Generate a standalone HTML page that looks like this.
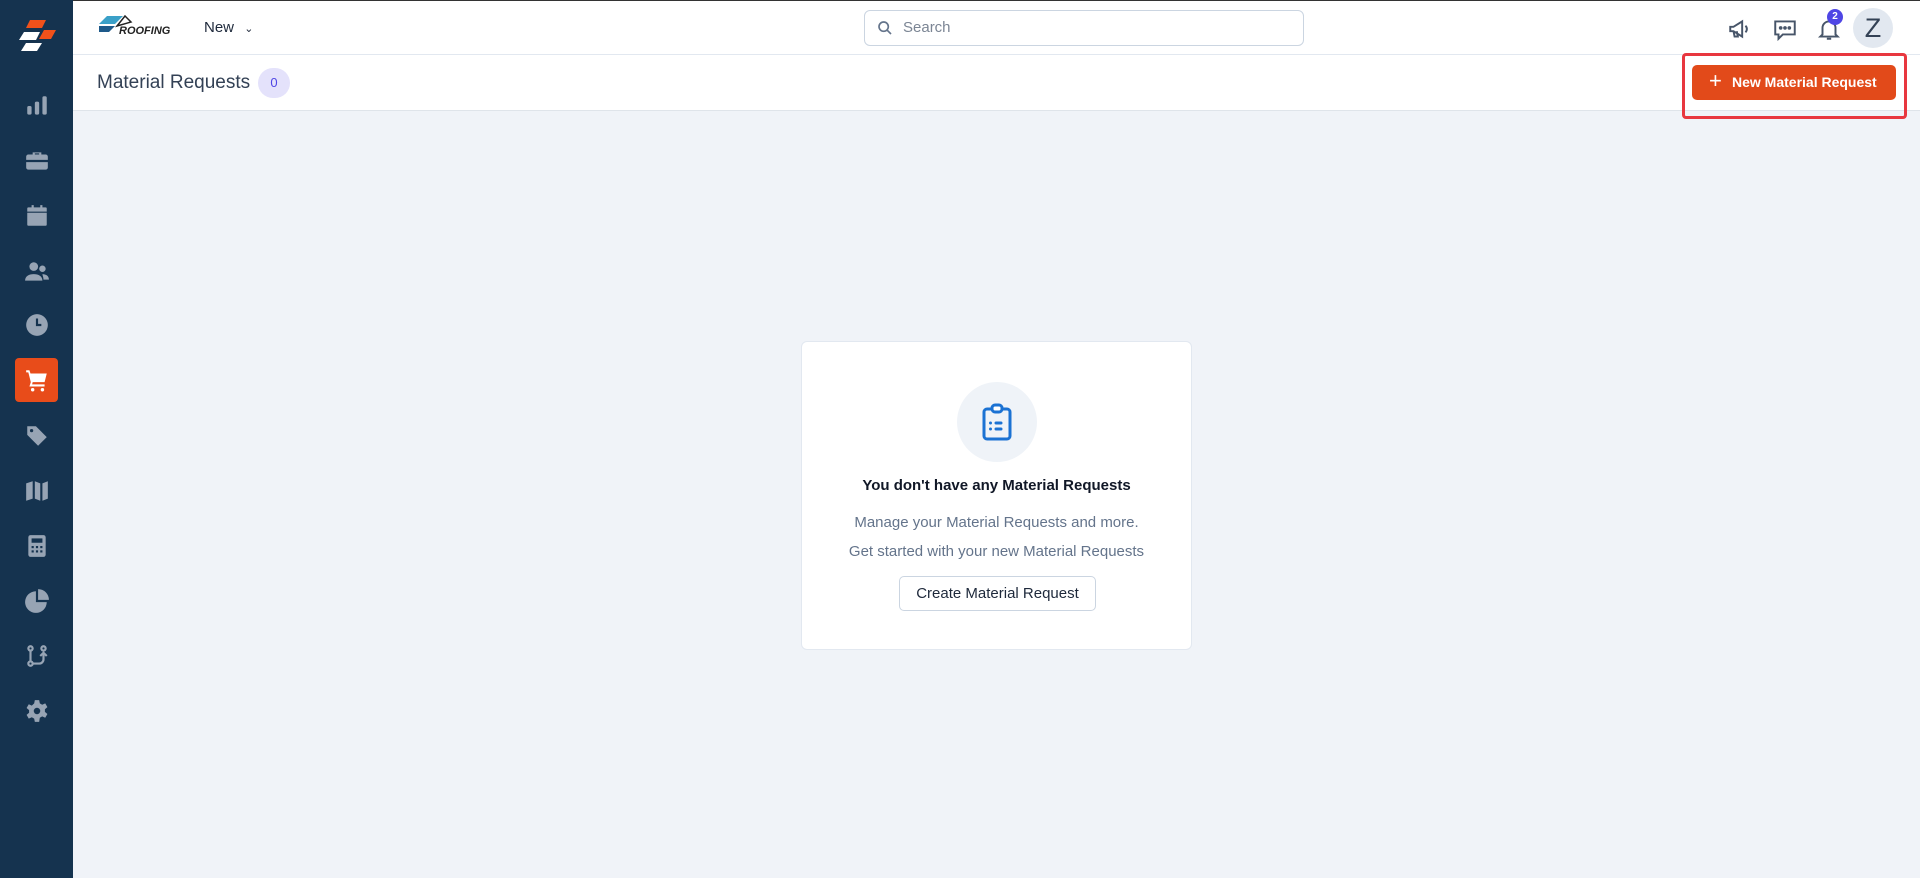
<!DOCTYPE html>
<html><head><meta charset="utf-8"><style>
*{box-sizing:border-box;margin:0;padding:0}
body{width:1920px;height:878px;overflow:hidden;background:#f0f3f8;font-family:"Liberation Sans",sans-serif;position:relative;color:#1e293b}
.side{position:absolute;left:0;top:0;width:73px;height:878px;background:#15334f}
.top{position:absolute;left:73px;top:0;right:0;height:55px;background:#fff;border-bottom:1px solid #e2e8f0;border-top:1px solid #333}
.hdr{position:absolute;left:73px;top:55px;right:0;height:56px;background:#fff;border-bottom:1px solid #dfe4ea}
.ic{position:absolute;left:24px;width:26px;height:26px}
.abs{position:absolute}
</style></head><body>
<div class="side">
<svg class="abs" style="left:16px;top:20px" width="42" height="42" viewBox="0 0 42 42">
<polygon points="14,0 30,0 26,8 10,8" fill="#f0511a"/>
<polygon points="28,10 40,10 35,19 23,19" fill="#f0511a"/>
<polygon points="8,12 24,12 20,20 3,20" fill="#fff"/>
<polygon points="10,23 26,23 21,31 5,31" fill="#fff"/>
</svg>
<svg class="ic" style="top:93px" viewBox="0 0 24 24" fill="#97a4b4"><rect x="3" y="12" width="4" height="8" rx="1.5"/><rect x="10" y="8" width="4" height="12" rx="1.5"/><rect x="17" y="3" width="4" height="17" rx="1.5"/></svg>
<svg class="ic" style="top:148px" viewBox="0 0 24 24" fill="#97a4b4"><path d="M8 6V4h8v2h4a2 2 0 0 1 2 2v3H2V8a2 2 0 0 1 2-2zm2 0h4V5h-4zM2 13h20v5a2 2 0 0 1-2 2H4a2 2 0 0 1-2-2z"/></svg>
<svg class="ic" style="top:203px" viewBox="0 0 24 24" fill="#97a4b4"><path d="M7 2h2v2h6V2h2v2h3a1 1 0 0 1 1 1v15a1 1 0 0 1-1 1H4a1 1 0 0 1-1-1V5a1 1 0 0 1 1-1h3zM3 8v1h18V8z"/></svg>
<svg class="ic" style="top:259px" viewBox="0 0 24 24" fill="#97a4b4"><circle cx="9" cy="7" r="4"/><circle cx="17" cy="9" r="3"/><path d="M1 20c0-4 3.5-6 8-6s8 2 8 6zM17 14c3 0 6 1.5 6 5h-5c0-2-1-4-1-5z"/></svg>
<svg class="ic" style="top:312px" viewBox="0 0 24 24"><circle cx="12" cy="12" r="10" fill="#97a4b4"/><path d="M12 6v6h4" stroke="#15334f" stroke-width="2" fill="none"/></svg>
<div class="abs" style="left:15px;top:358px;width:43px;height:44px;background:#e84c1a;border-radius:4px"></div>
<svg class="ic" style="top:367px" viewBox="0 0 24 24" fill="#fff"><path d="M2 3h3l1 3h15l-2 8H8l-.5 2H19v2H5l1.3-4L4 5H2z"/><circle cx="8" cy="21" r="1.6"/><circle cx="17" cy="21" r="1.6"/></svg>
<svg class="ic" style="top:423px" viewBox="0 0 24 24" fill="#97a4b4"><path d="M3 3h8l10 10-8 8L3 11z"/><circle cx="7" cy="7" r="1.5" fill="#15334f"/></svg>
<svg class="ic" style="top:478px" viewBox="0 0 24 24" fill="#97a4b4"><path d="M2 5l6-2v16l-6 2zM10 3l5 2v16l-5-2zM17 5l5-2v16l-5 2z"/></svg>
<svg class="ic" style="top:533px" viewBox="0 0 24 24"><rect x="4" y="2" width="16" height="20" rx="2" fill="#97a4b4"/><rect x="7" y="5" width="10" height="4" fill="#15334f"/><g fill="#15334f"><rect x="7" y="12" width="2" height="2"/><rect x="11" y="12" width="2" height="2"/><rect x="15" y="12" width="2" height="2"/><rect x="7" y="16" width="2" height="2"/><rect x="11" y="16" width="2" height="2"/><rect x="15" y="16" width="2" height="2"/></g></svg>
<svg class="ic" style="top:588px" viewBox="0 0 24 24" fill="#97a4b4"><path d="M11 3v10h10a10 10 0 1 1-10-10z"/><path d="M13 1a10 10 0 0 1 10 10H13z"/></svg>
<svg class="ic" style="top:643px" viewBox="0 0 24 24" fill="none" stroke="#97a4b4" stroke-width="2"><circle cx="6" cy="5" r="2"/><circle cx="6" cy="19" r="2"/><path d="M6 7v10M8 19h6a4 4 0 0 0 4-4v-5M15 12l3-3 3 3"/><circle cx="18" cy="5" r="2"/></svg>
<svg class="ic" style="top:698px" viewBox="0 0 24 24" fill="#97a4b4"><path d="M10 2h4l.6 3 2.2 1.2 2.8-1.2 2 3.4-2.3 2 0 2.4 2.3 2-2 3.4-2.8-1.2-2.2 1.2L14 22h-4l-.6-3-2.2-1.2-2.8 1.2-2-3.4 2.3-2v-2.4l-2.3-2 2-3.4 2.8 1.2L9.4 5z"/><circle cx="12" cy="12" r="3" fill="#15334f"/></svg>
</div>
<div class="top">
<svg class="abs" style="left:26px;top:13px" width="86" height="26" viewBox="0 0 86 26"><polygon points="8,2 24,2 16,10 0,10" fill="#3aa0c8"/><polygon points="0,12 16,12 10,18 -4,18" fill="#1e5a8a"/><polygon points="18,12 26,2 32,8" fill="none" stroke="#222" stroke-width="1.5"/><text x="20" y="20" font-size="11" font-style="italic" font-weight="bold" fill="#222" font-family="Liberation Sans">ROOFING</text></svg>
<div class="abs" style="left:131px;top:18px;font-size:15px;color:#1e293b">New <span style="font-size:11px;margin-left:6px">&#8964;</span></div>
<div class="abs" style="left:791px;top:9px;width:440px;height:36px;border:1px solid #cbd5e1;border-radius:6px;background:#fff">
<svg class="abs" style="left:12px;top:9px" width="16" height="16" viewBox="0 0 24 24" fill="none" stroke="#64748b" stroke-width="2.5"><circle cx="10" cy="10" r="7"/><path d="M15 15l6 6"/></svg>
<span class="abs" style="left:38px;top:8px;font-size:15px;color:#7b8594">Search</span></div>
<svg class="abs" style="left:1654px;top:15px" width="26" height="26" viewBox="0 0 24 24" fill="none" stroke="#475569" stroke-width="1.8"><path d="M3 10v4h3l8 5V5L6 10zM6 14l1 5h3l-1-5M17 9a4 4 0 0 1 0 6"/></svg>
<svg class="abs" style="left:1699px;top:15px" width="26" height="26" viewBox="0 0 24 24" fill="none" stroke="#475569" stroke-width="1.8"><path d="M3 5h18v12H10l-4 4v-4H3z"/><circle cx="8" cy="11" r=".8" fill="#475569"/><circle cx="12" cy="11" r=".8" fill="#475569"/><circle cx="16" cy="11" r=".8" fill="#475569"/></svg>
<svg class="abs" style="left:1743px;top:15px" width="26" height="26" viewBox="0 0 24 24" fill="none" stroke="#475569" stroke-width="1.8"><path d="M6 17V11a6 6 0 0 1 12 0v6l2 2H4zM10 21h4"/></svg>
<div class="abs" style="left:1754px;top:8px;width:16px;height:16px;border-radius:50%;background:#4f46e5;color:#fff;font-size:10px;text-align:center;line-height:16px;font-weight:bold">2</div>
<div class="abs" style="left:1780px;top:7px;width:40px;height:40px;border-radius:50%;background:#e2e8f0;text-align:center;line-height:40px;font-size:27px;color:#334155">Z</div>
</div>
<div class="hdr">
<div class="abs" style="left:24px;top:17px;font-size:19px;color:#334155">Material Requests</div>
<div class="abs" style="left:185px;top:13px;width:32px;height:30px;border-radius:15px;background:#e4e2fb;color:#4f46e5;font-size:13px;text-align:center;line-height:30px">0</div>
<div class="abs" style="left:1609px;top:-2px;width:225px;height:66px;border:3px solid #e8373f;border-radius:4px"></div>
<div class="abs" style="left:1619px;top:10px;width:204px;height:35px;background:#e24a1a;border-radius:5px;color:#fff;font-size:14px;font-weight:bold;line-height:35px;padding-left:40px;white-space:nowrap">New Material Request</div>
<div class="abs" style="left:1636px;top:12px;color:#fff;font-size:22px;line-height:28px">+</div>
</div>
<div class="abs" style="left:801px;top:341px;width:391px;height:309px;background:#fff;border:1px solid #e2e8f0;border-radius:6px">
<div class="abs" style="left:155px;top:40px;width:80px;height:80px;border-radius:50%;background:#eff3f8"></div>
<svg class="abs" style="left:179px;top:61px" width="32" height="38" viewBox="0 0 32 38" fill="none" stroke="#1b72d3" stroke-width="3"><rect x="3" y="6" width="26" height="30" rx="3"/><rect x="11" y="2" width="10" height="7" rx="3" fill="#fff"/><g stroke-width="3" stroke-linecap="round"><path d="M9.5 20h0M15 20h5M9.5 26h0M15 26h5"/></g></svg>
<div class="abs" style="left:0;width:100%;top:135px;text-align:center;font-size:15px;font-weight:bold;color:#111827">You don't have any Material Requests</div>
<div class="abs" style="left:0;width:100%;top:172px;text-align:center;font-size:15px;color:#64748b">Manage your Material Requests and more.</div>
<div class="abs" style="left:0;width:100%;top:201px;text-align:center;font-size:15px;color:#64748b">Get started with your new Material Requests</div>
<div class="abs" style="left:97px;top:234px;width:197px;height:35px;border:1px solid #cbd5e1;border-radius:5px;text-align:center;line-height:33px;font-size:15px;color:#1e293b">Create Material Request</div>
</div>
</body></html>
